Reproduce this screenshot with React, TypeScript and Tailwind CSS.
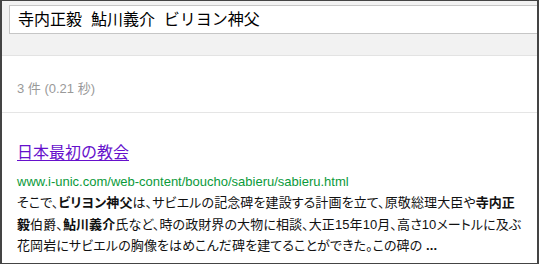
export default function App() {
  const jp = { fontFamily: '"Liberation Sans", "Noto Sans CJK JP", sans-serif' };
  return (
    <div
      className="w-[539px] h-[264px] overflow-hidden border-l-2 border-r-2 border-t border-b border-[#444] bg-white flex flex-col"
      style={jp}
    >
      {/* search bar */}
      <div className="h-[55px] shrink-0 bg-[#f2f2f2] border-b border-[#e3e3e3] pl-[7px] pt-[4px]">
        <div className="h-[29px] border-t border-l border-b border-[#c6c6c6] bg-white flex items-center pl-[8px] text-[16px] text-black whitespace-nowrap">
          寺内正毅&nbsp;&nbsp;鮎川義介&nbsp;&nbsp;ビリヨン神父
        </div>
      </div>

      {/* stats */}
      <div className="h-[57px] shrink-0 border-b border-[#e5e5e5] pl-[15px] pt-[23px] text-[13px] text-[#999]">
        3 件 (0.21 秒)
      </div>

      {/* result */}
      <div className="pl-[15px] pt-[30px]">
        <a href="#" className="block text-[16px] leading-[20px] text-[#6611cc] underline underline-offset-[2px] w-fit">
          日本最初の教会
        </a>
        <div className="mt-[11px] text-[13px] leading-[16px] text-[#0a9a3a]">
          www.i-unic.com/web-content/boucho/sabieru/sabieru.html
        </div>
        <div
          className="mt-[2px] text-[13px] leading-[21.5px] text-[#111] pr-[8px]"
          style={{ fontFeatureSettings: '"palt"', letterSpacing: '0.1px' }}
        >
          そこで、<b>ビリヨン神父</b>は、サビエルの記念碑を建設する計画を立て、原敬総理大臣や<b>寺内正</b>
          <br />
          <b>毅</b>伯爵、<b>鮎川義介</b>氏など、時の政財界の大物に相談、大正15年10月、高さ10メートルに及ぶ
          <br />
          花岡岩にサビエルの胸像をはめこんだ碑を建てることができた。この碑の <b>...</b>
        </div>
      </div>
    </div>
  );
}
